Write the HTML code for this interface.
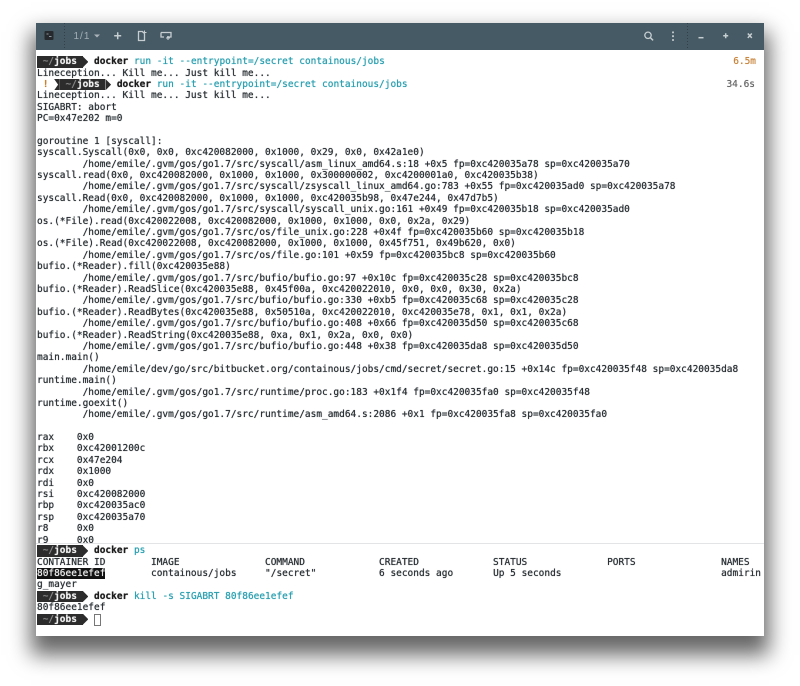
<!DOCTYPE html>
<html><head><meta charset="utf-8">
<style>
html,body{margin:0;padding:0;width:800px;height:686px;overflow:hidden;background:#fff}
#win{position:absolute;left:36px;top:23px;width:728px;height:613px;background:#fff;box-shadow:0 14px 20px 5px rgba(0,0,0,.6)}
#hdr{position:absolute;left:0;top:0;width:728px;height:27px;background:#465a65}
#hdr svg{position:absolute;left:0;top:0;filter:blur(.3px)}
pre{position:absolute;left:1px;margin:0;font:9.47px/11.39px "DejaVu Sans Mono",monospace;color:#2a3034;white-space:pre;filter:blur(.2px);text-shadow:0 0 .6px}
#p1{position:absolute;left:0;top:27px;width:728px;height:493px;overflow:hidden}
#p1 pre{top:6.2px}
#div{position:absolute;left:0;top:520px;width:728px;height:1px;background:#e2e4e5}
#p2{position:absolute;left:0;top:521px;width:728px;height:92px;overflow:hidden}
#p2 pre{top:1.2px}
b{font-weight:bold;color:#1c1c1c}
.c{color:#2a9fb0}
.p{background:#2c2c2c;color:#8a8a8a;display:inline-block;height:11.39px;vertical-align:top}
.p b{color:#eee}
.a{display:inline-block;width:5.7px;height:11.39px;vertical-align:top;background:#2c2c2c;clip-path:polygon(0 0,100% 50%,0 100%)}
.n{display:inline-block;width:5.7px;height:11.39px;vertical-align:top;background:#2c2c2c;clip-path:polygon(0 0,100% 0,100% 100%,0 100%,70% 50%)}
.s{background:#111;color:#eee}
.r{position:absolute;font:9.47px/11.39px "DejaVu Sans Mono",monospace;filter:blur(.2px);text-shadow:0 0 .5px}
.cur{display:inline-block;width:7px;height:12px;box-sizing:border-box;border:1px solid #777;vertical-align:top;margin-left:-.5px}
</style></head>
<body>
<div id="win">
<div id="hdr">
<svg width="728" height="27" viewBox="0 0 728 27" fill="none">
<rect x="8.5" y="8" width="9" height="9" rx="1" fill="#262a2e"/>
<path d="M10.5 11h2M13 13.5h2.5" stroke="#8b979c" stroke-width=".9"/>
<path d="M28.5 0V27M651.5 0V27" stroke="#334049" stroke-dasharray="1 2"/>
<text x="37.5" y="16" font-family="Liberation Sans,sans-serif" font-size="10" letter-spacing="1" fill="#a3afb5">1/1</text>
<path d="M58 11.5h6l-3 3z" fill="#a9b4ba"/>
<path d="M81.7 9.2v7M78.2 12.7h7" stroke="#c6ced1" stroke-width="1.5"/>
<path d="M102.5 8.5h4l2 2v7h-6z" stroke="#c6ced1" stroke-width="1.3"/>
<path d="M108.5 7.5v4M106.5 9.5h4" stroke="#c6ced1" stroke-width="1"/>
<path d="M125 9.5h10v4.5h-4M125 9.5v4.5h3" stroke="#c6ced1" stroke-width="1.3"/>
<path d="M132 13v4M130 15h4" stroke="#c6ced1" stroke-width="1.1"/>
<circle cx="612" cy="12.3" r="3.2" stroke="#c6ced1" stroke-width="1.3"/>
<path d="M614.5 14.8l2.6 2.6" stroke="#c6ced1" stroke-width="1.5"/>
<path d="M637 8.5v1.8M637 12.3v1.8M637 16.1v1.8" stroke="#c6ced1" stroke-width="1.8"/>
<path d="M662.5 14.7h5" stroke="#c6ced1" stroke-width="1.5"/>
<path d="M687.2 12.7h5M689.7 10.2v5" stroke="#c6ced1" stroke-width="1.5"/>
<path d="M711.8 10.5l4 4.4M715.8 10.5l-4 4.4" stroke="#c6ced1" stroke-width="1.5"/>
</svg>
</div>
<div id="p1"><pre><span class="p"> ~/<b>jobs</b> </span><span class="a"></span> <b>docker</b> <span class="c">run -it --entrypoint=/secret containous/jobs</span>
Lineception... Kill me... Just kill me...
 <span style="color:#c8822f;font-weight:bold">!</span> <span class="n"></span><span class="p"> ~/<b>jobs</b> </span><span class="a"></span> <b>docker</b> <span class="c">run -it --entrypoint=/secret containous/jobs</span>
Lineception... Kill me... Just kill me...
SIGABRT: abort
PC=0x47e202 m=0

goroutine 1 [syscall]:
syscall.Syscall(0x0, 0x0, 0xc420082000, 0x1000, 0x29, 0x0, 0x42a1e0)
        /home/emile/.gvm/gos/go1.7/src/syscall/asm_linux_amd64.s:18 +0x5 fp=0xc420035a78 sp=0xc420035a70
syscall.read(0x0, 0xc420082000, 0x1000, 0x1000, 0x300000002, 0xc4200001a0, 0xc420035b38)
        /home/emile/.gvm/gos/go1.7/src/syscall/zsyscall_linux_amd64.go:783 +0x55 fp=0xc420035ad0 sp=0xc420035a78
syscall.Read(0x0, 0xc420082000, 0x1000, 0x1000, 0xc420035b98, 0x47e244, 0x47d7b5)
        /home/emile/.gvm/gos/go1.7/src/syscall/syscall_unix.go:161 +0x49 fp=0xc420035b18 sp=0xc420035ad0
os.(*File).read(0xc420022008, 0xc420082000, 0x1000, 0x1000, 0x0, 0x2a, 0x29)
        /home/emile/.gvm/gos/go1.7/src/os/file_unix.go:228 +0x4f fp=0xc420035b60 sp=0xc420035b18
os.(*File).Read(0xc420022008, 0xc420082000, 0x1000, 0x1000, 0x45f751, 0x49b620, 0x0)
        /home/emile/.gvm/gos/go1.7/src/os/file.go:101 +0x59 fp=0xc420035bc8 sp=0xc420035b60
bufio.(*Reader).fill(0xc420035e88)
        /home/emile/.gvm/gos/go1.7/src/bufio/bufio.go:97 +0x10c fp=0xc420035c28 sp=0xc420035bc8
bufio.(*Reader).ReadSlice(0xc420035e88, 0x45f00a, 0xc420022010, 0x0, 0x0, 0x30, 0x2a)
        /home/emile/.gvm/gos/go1.7/src/bufio/bufio.go:330 +0xb5 fp=0xc420035c68 sp=0xc420035c28
bufio.(*Reader).ReadBytes(0xc420035e88, 0x50510a, 0xc420022010, 0xc420035e78, 0x1, 0x1, 0x2a)
        /home/emile/.gvm/gos/go1.7/src/bufio/bufio.go:408 +0x66 fp=0xc420035d50 sp=0xc420035c68
bufio.(*Reader).ReadString(0xc420035e88, 0xa, 0x1, 0x2a, 0x0, 0x0)
        /home/emile/.gvm/gos/go1.7/src/bufio/bufio.go:448 +0x38 fp=0xc420035da8 sp=0xc420035d50
main.main()
        /home/emile/dev/go/src/bitbucket.org/containous/jobs/cmd/secret/secret.go:15 +0x14c fp=0xc420035f48 sp=0xc420035da8
runtime.main()
        /home/emile/.gvm/gos/go1.7/src/runtime/proc.go:183 +0x1f4 fp=0xc420035fa0 sp=0xc420035f48
runtime.goexit()
        /home/emile/.gvm/gos/go1.7/src/runtime/asm_amd64.s:2086 +0x1 fp=0xc420035fa8 sp=0xc420035fa0

rax    0x0
rbx    0xc42001200c
rcx    0x47e204
rdx    0x1000
rdi    0x0
rsi    0xc420082000
rbp    0xc420035ac0
rsp    0xc420035a70
r8     0x0
r9     0x0</pre>
<div class="r" style="right:8px;top:6.2px;color:#c8843c">6.5m</div>
<div class="r" style="right:9px;top:29px;color:#666">34.6s</div>
</div>
<div id="div"></div>
<div id="p2"><pre><span class="p"> ~/<b>jobs</b> </span><span class="a"></span> <b>docker</b> <span class="c">ps</span>
CONTAINER ID        IMAGE               COMMAND             CREATED             STATUS              PORTS               NAMES
<span class="s">80f86ee1efef</span>        containous/jobs     "/secret"           6 seconds ago       Up 5 seconds                            admirin
g_mayer
<span class="p"> ~/<b>jobs</b> </span><span class="a"></span> <b>docker</b> <span class="c">kill -s SIGABRT 80f86ee1efef</span>
80f86ee1efef
<span class="p"> ~/<b>jobs</b> </span><span class="a"></span> <span class="cur"></span></pre></div>
</div>
</body></html>
